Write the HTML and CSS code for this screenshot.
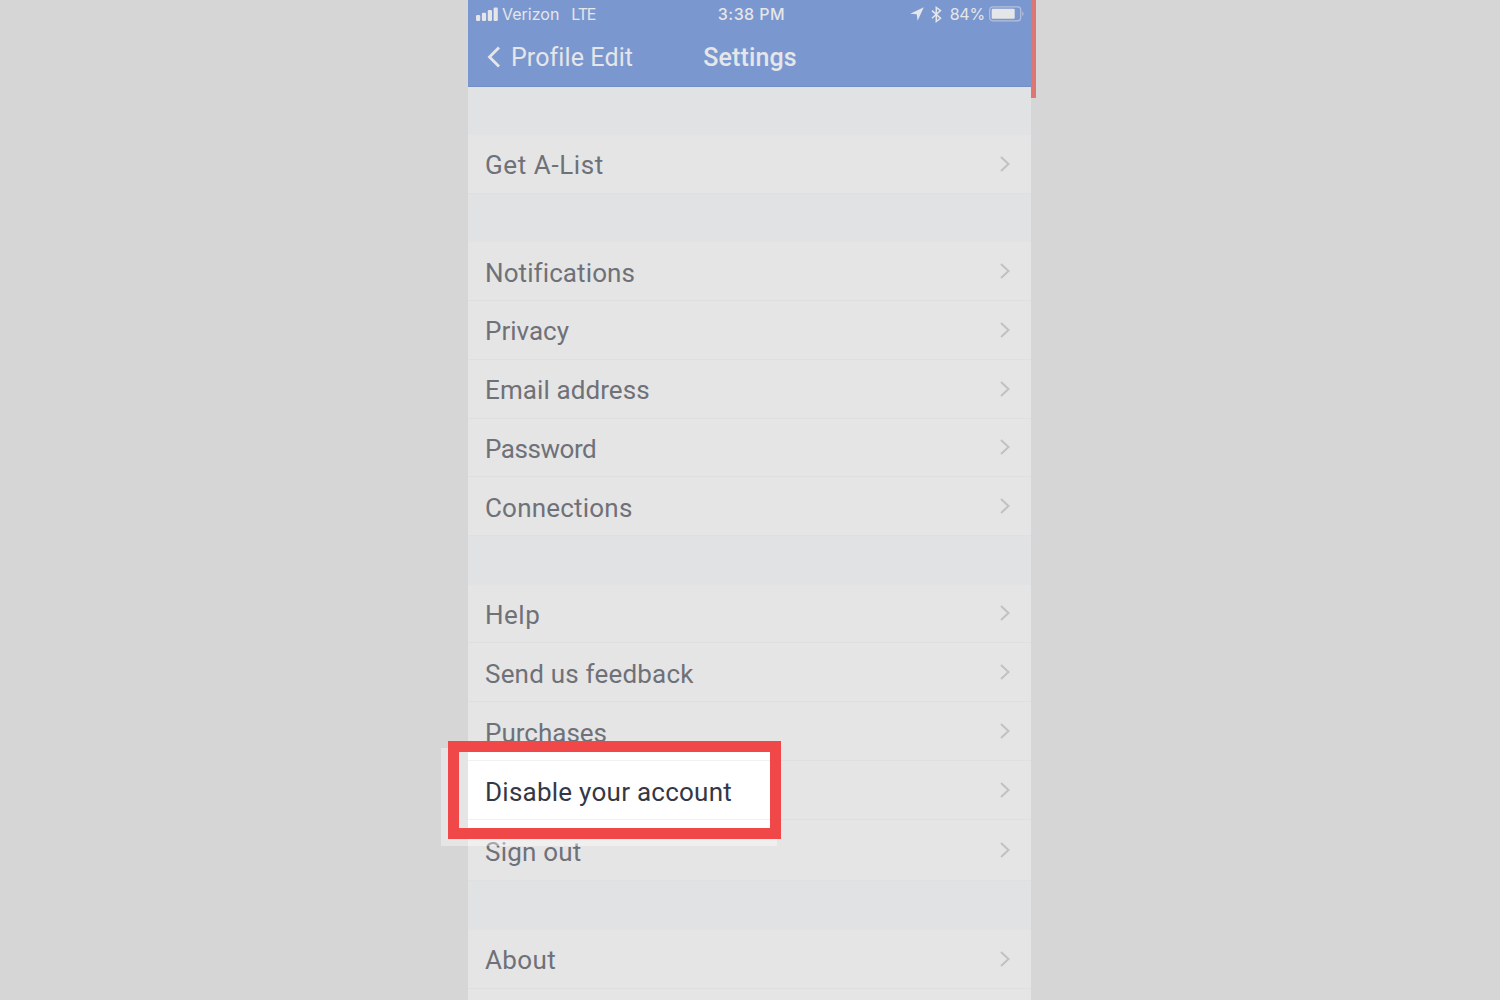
FILE: index.html
```html
<!DOCTYPE html>
<html lang="en">
<head>
<meta charset="utf-8">
<title>Settings</title>
<link rel="stylesheet" href="styles.css">
</head>
<body>
<svg class="defs" width="0" height="0"><symbol id="chevron" viewBox="0 0 12 18"><path d="M2 2l7.5 7L2 16" fill="none" stroke="currentColor" stroke-width="2"/></symbol></svg>
<main class="phone">
  <header class="header">
    <div class="status">
      <div class="carrier">
        <svg width="22" height="14" viewBox="0 0 22 14" fill="currentColor"><rect x="0" y="8" width="4.2" height="6" rx="1.2"/><rect x="5.9" y="5.7" width="4.2" height="8.3" rx="1.2"/><rect x="11.8" y="3" width="4.2" height="11" rx="1.2"/><rect x="17.6" y="0.5" width="4.2" height="13.5" rx="1.2"/></svg>
        <span class="verizon">Verizon</span><span class="lte">LTE</span>
      </div>
      <span class="time">3:38 PM</span>
      <div class="indicators">
        <svg class="location" width="14" height="14" viewBox="0 0 14 14"><path d="M13.8.2L7.6 13.7 6.7 7.2.2 6.8z" fill="currentColor"/></svg>
        <svg class="bluetooth" width="11" height="17" viewBox="0 0 11 17"><path d="M1 4.6l8.5 7.7-4.2 3.2V1.5l4.2 3.1L1 12.3" fill="none" stroke="currentColor" stroke-width="1.5"/></svg>
        <span class="percent">84%</span>
        <svg class="battery" width="36" height="16" viewBox="0 0 36 16"><rect x=".7" y=".8" width="31" height="14" rx="3" fill="none" stroke="#b5c1da" stroke-width="1.2"/><rect x="2.7" y="2.8" width="23" height="10" rx="1" fill="currentColor"/><path d="M33.3 5.3q2.6 2.5 0 5z" fill="#b5c1da"/></svg>
      </div>
    </div>
    <nav class="navbar">
      <div class="back"><svg width="14" height="22" viewBox="0 0 14 22"><path d="M12 1.5L2.5 11 12 20.5" fill="none" stroke="currentColor" stroke-width="2.8"/></svg><span>Profile Edit</span></div>
      <h1>Settings</h1>
    </nav>
  </header>
  <section class="group">
    <div class="row"><span class="label l-get">Get A-List</span><svg class="chev"><use href="#chevron"/></svg></div>
  </section>
  <section class="group">
    <div class="row"><span class="label l-notif">Notifications</span><svg class="chev"><use href="#chevron"/></svg></div>
    <div class="row"><span class="label l-priv">Privacy</span><svg class="chev"><use href="#chevron"/></svg></div>
    <div class="row"><span class="label l-email">Email address</span><svg class="chev"><use href="#chevron"/></svg></div>
    <div class="row"><span class="label l-pass">Password</span><svg class="chev"><use href="#chevron"/></svg></div>
    <div class="row"><span class="label l-conn">Connections</span><svg class="chev"><use href="#chevron"/></svg></div>
  </section>
  <section class="group">
    <div class="row"><span class="label l-help">Help</span><svg class="chev"><use href="#chevron"/></svg></div>
    <div class="row"><span class="label l-send">Send us feedback</span><svg class="chev"><use href="#chevron"/></svg></div>
    <div class="row"><span class="label l-purch">Purchases</span><svg class="chev"><use href="#chevron"/></svg></div>
    <div class="row active"><div class="ghost"></div><div class="spotlight"></div><span class="label l-dis">Disable your account</span><svg class="chev"><use href="#chevron"/></svg></div>
    <div class="row last"><span class="label l-sign">Sign out</span><svg class="chev"><use href="#chevron"/></svg></div>
  </section>
  <section class="group about">
    <div class="row"><span class="label l-about">About</span><svg class="chev"><use href="#chevron"/></svg></div>
    <div class="row"></div>
  </section>
  <div class="edge"></div>
</main>
</body>
</html>
```
FILE: styles.css
```css
* { box-sizing: border-box; }
body {
  margin: 0;
  height: 1000px;
  overflow: hidden;
  background: #d6d6d6;
  font-family: Roboto, "Liberation Sans", sans-serif;
}
.defs { position: absolute; }
.phone {
  position: relative;
  width: 563px;
  height: 1000px;
  margin-left: 468px;
  background: #e0e2e3;
}
.header {
  height: 87px;
  background: #7b97d0;
  border-bottom: 1px solid #748fc5;
  color: #e5e6e8;
}
.status {
  display: grid;
  grid-template-columns: 1fr auto 1fr;
  align-items: center;
  height: 28px;
  padding: 0 6px 0 8px;
  font-family: Inter, sans-serif;
  font-size: 16px;
}
.carrier, .indicators { display: flex; align-items: center; }
.indicators { justify-content: flex-end; }
.verizon { margin-left: 4px; letter-spacing: 0; }
.lte { margin-left: 12px; letter-spacing: -1.2px; }
.time { padding-left: 2px; font-weight: 500; letter-spacing: 0.45px; }
.bluetooth { margin-left: 7px; }
.percent { margin: 0 4px 0 8px; letter-spacing: -0.2px; }
.navbar {
  display: grid;
  grid-template-columns: 1fr auto 1fr;
  align-items: center;
  height: 58px;
  padding: 0 18px 0 19px;
}
.back { display: flex; align-items: center; gap: 10px; font-size: 25px; letter-spacing: 0.1px; }
h1 { margin: 0; font-size: 25px; font-weight: 500; letter-spacing: 0.15px; }
.group { padding-top: 48px; }
.group + .group { padding-top: 48.4px; }
.group.about { padding-top: 49px; }
.row {
  position: relative;
  display: flex;
  align-items: center;
  justify-content: space-between;
  height: 58.8px;
  padding: 0 20px 0 17px;
  background: #e5e5e5;
  border-bottom: 1px solid #dedfdf;
}
.row.active { height: 59.4px; }
.row.last { height: 60.4px; }
.label {
  color: #6f7179;
  font-size: 26px;
  line-height: 30px;
  white-space: nowrap;
  padding-top: 3px;
}
.l-get { letter-spacing: 0.6px; }
.l-notif { letter-spacing: 0.1px; }
.l-priv { letter-spacing: 0; }
.l-email { letter-spacing: 0.1px; }
.l-pass { letter-spacing: -0.45px; }
.l-conn { letter-spacing: 0.2px; }
.l-help { letter-spacing: 0.5px; }
.l-send { letter-spacing: 0.2px; }
.l-purch { letter-spacing: 0; }
.l-dis { letter-spacing: 0.25px; }
.l-sign { letter-spacing: 0.2px; }
.l-about { letter-spacing: 0.4px; }
.chev { width: 12px; height: 18px; color: #c0c1c2; }
.active { z-index: 1; }
.active .label { position: relative; color: #343846; }
.ghost {
  position: absolute;
  left: -27px;
  top: -13px;
  width: 336px;
  height: 98px;
  background: rgba(255, 255, 255, 0.38);
}
.spotlight {
  position: absolute;
  left: -20px;
  top: -20px;
  width: 333px;
  height: 98px;
  border: 11px solid #f04848;
  background:
    linear-gradient(#f1f1f1, #f1f1f1) 9px 8px / 302px 1px no-repeat,
    linear-gradient(#f1f1f1, #f1f1f1) 9px 67px / 302px 1px no-repeat,
    linear-gradient(90deg, #e5e5e5 9px, #fff 9px);
}
.edge {
  position: absolute;
  left: 563px;
  top: 0;
  width: 5px;
  height: 98px;
  background: #de7676;
}
```
